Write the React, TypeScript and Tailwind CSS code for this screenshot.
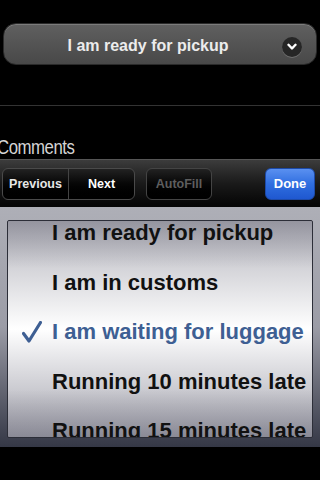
import React from "react";

const rows = [
  "I am ready for pickup",
  "I am in customs",
  "I am waiting for luggage",
  "Running 10 minutes late",
  "Running 15 minutes late",
];

const Check = () => (
  <svg width="20" height="22" viewBox="0 0 20 22" className="absolute left-[14px] top-1/2 -translate-y-1/2">
    <path d="M1.5 12.5 L7 20 L18.5 1.5" fill="none" stroke="#3e5f93" strokeWidth="3.2" strokeLinecap="round" strokeLinejoin="round" />
  </svg>
);

const App = () => {
  const selected = 2;

  return (
    <div className="w-[320px] h-[480px] bg-black overflow-hidden flex flex-col" style={{ fontFamily: '"Liberation Sans", Arial, sans-serif' }}>
      {/* status picker button */}
      <div className="h-[105px] pt-[23px] px-[3px]">
        <div className="relative h-[42px] rounded-[13px] border border-[#2a2a2a] bg-gradient-to-b from-[#606060] to-[#484848] shadow-[inset_0_1px_0_rgba(255,255,255,0.18)] flex items-center justify-center">
          <span className="text-[16px] font-bold text-[#ececec] -ml-[24px] mt-[4px]">I am ready for pickup</span>
          <div className="absolute right-[14px] top-[13px] w-[20px] h-[20px] rounded-full bg-[#262626] shadow-[0_1px_0_rgba(255,255,255,0.2)] flex items-center justify-center">
            <svg width="10" height="8" viewBox="0 0 10 8">
              <path d="M1.5 1.8 L5 5.5 L8.5 1.8" fill="none" stroke="#fff" strokeWidth="2.4" strokeLinecap="round" strokeLinejoin="round" />
            </svg>
          </div>
        </div>
      </div>
      <div className="h-px bg-[#333]" />

      {/* comments label */}
      <div className="h-[53px] flex items-end">
        <span className="text-[21px] leading-[24px] text-[#d4d4d4] -ml-[3px] tracking-[-0.6px] scale-x-[0.8] origin-left">Comments</span>
      </div>

      {/* keyboard toolbar */}
      <div className="h-[48px] border-t border-[#555] bg-gradient-to-b from-[#3c3c3c] via-[#1a1a1a] to-[#050505] flex items-center px-[2px] pt-[1px]">
        <div className="flex h-[32px] w-[133px] rounded-[6px] border border-[#4a4a4a] bg-gradient-to-b from-[#222] to-[#000] overflow-hidden">
          <div className="w-[66px] flex items-center justify-center border-r border-[#444] text-[12.5px] font-bold text-[#e6e6e6]">Previous</div>
          <div className="flex-1 flex items-center justify-center text-[12.5px] font-bold text-white">Next</div>
        </div>
        <div className="ml-[11px] h-[32px] w-[66px] rounded-[6px] border border-[#444] bg-gradient-to-b from-[#222] to-[#000] flex items-center justify-center text-[12.5px] font-bold text-[#5e5e5e]">AutoFill</div>
        <div className="ml-auto mr-[3px] h-[32px] w-[50px] rounded-[6px] border border-[#1d4aa8] bg-gradient-to-b from-[#5a90f0] via-[#2f6ee0] to-[#1f58d0] flex items-center justify-center text-[13px] font-bold text-white">Done</div>
      </div>

      {/* picker */}
      <div className="h-[240px] px-[7px] pt-[13px] pb-[9px] bg-gradient-to-b from-[#aeafb7] via-[#9b9ca6] to-[#353846]">
        <div className="relative h-full rounded-[2px] border border-[#2c2e38] overflow-hidden bg-gradient-to-b from-[#b4b4bc] via-white to-[#a4a4ae]">
          <div className="absolute inset-0 bg-[linear-gradient(to_bottom,rgba(90,90,105,0.35),rgba(255,255,255,0)_22%,rgba(255,255,255,0)_78%,rgba(90,90,105,0.35))]" />
          <div className="relative -mt-[13px]">
            {rows.map((r, i) => (
              <div key={r} className="relative h-[49.5px] flex items-center pl-[44px]">
                {i === selected && <Check />}
                <span className={`text-[22px] font-bold ${i === selected ? "text-[#3e5f93]" : "text-[#111]"}`}>{r}</span>
              </div>
            ))}
          </div>
        </div>
      </div>
    </div>
  );
};

export default App;
